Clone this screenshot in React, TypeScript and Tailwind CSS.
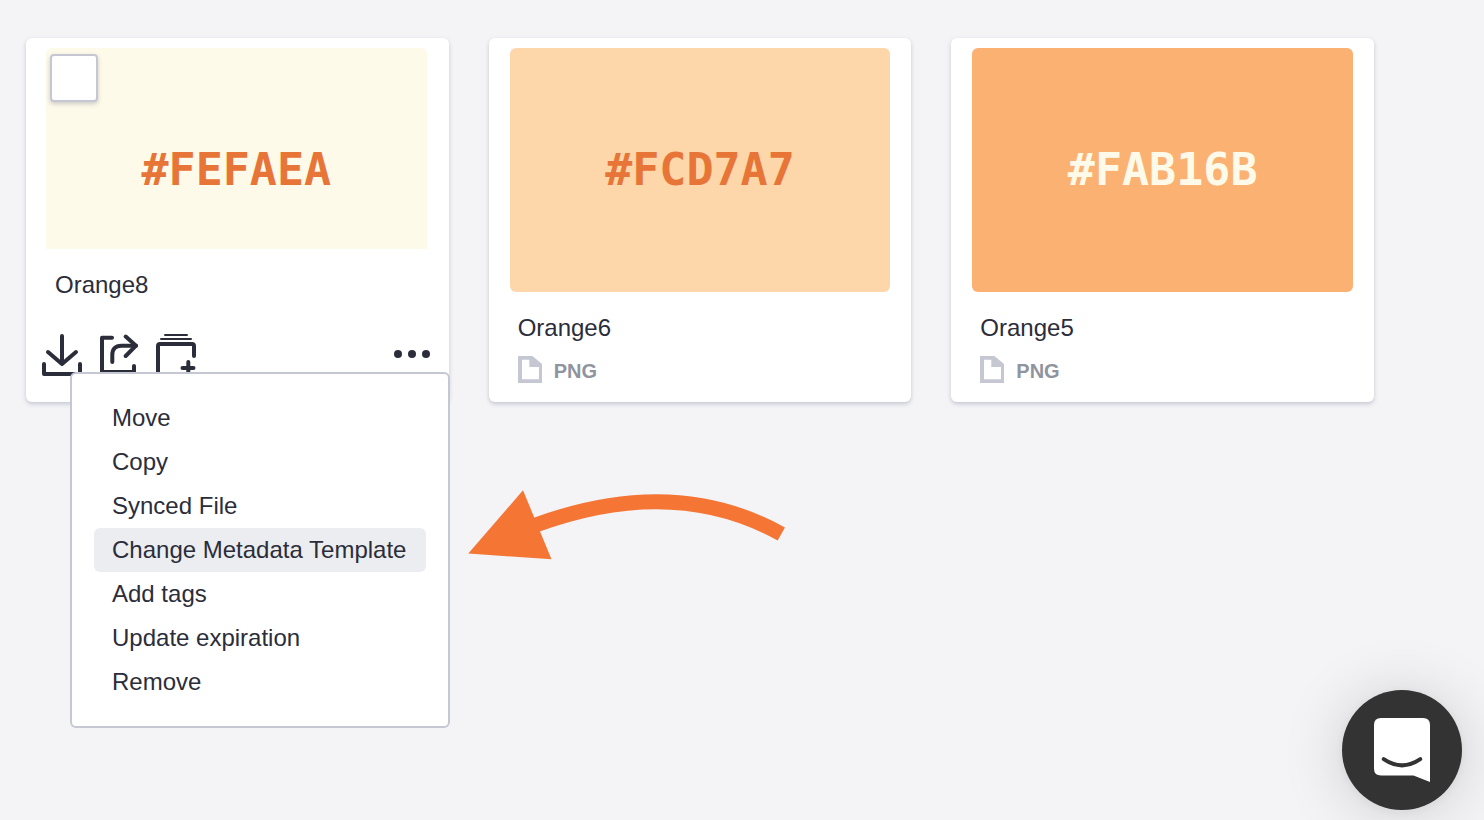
import React from 'react';

interface Asset {
  name: string;
  hex: string;
  tile: string;
  label: string;
}

const assets: Asset[] = [
  { name: 'Orange6', hex: '#FCD7A7', tile: 'bg-[#fdd7aa]', label: 'text-[#e87538]' },
  { name: 'Orange5', hex: '#FAB16B', tile: 'bg-[#fbb171]', label: 'text-[#fefaea]' },
];

const menuItems = [
  'Move',
  'Copy',
  'Synced File',
  'Change Metadata Template',
  'Add tags',
  'Update expiration',
  'Remove',
];

const DownloadIcon: React.FC = () => (
  <svg width="40" height="42" viewBox="0 0 40 42" fill="none" stroke="currentColor" strokeWidth="4" strokeLinecap="round" strokeLinejoin="round">
    <path d="M20 2v27M6 18l14 12 14-12" />
    <path d="M2 30v10h36V30" />
  </svg>
);

const ShareIcon: React.FC = () => (
  <svg width="38" height="42" viewBox="0 0 38 42" fill="none" stroke="currentColor" strokeWidth="4" strokeLinecap="round" strokeLinejoin="round">
    <path d="M12 3.7H2V38h32v-6" />
    <path d="M12.3 28v-7c0-6 3-9.3 9-9.3H36" />
    <path d="M25.7 2.5L36 11.7L25.7 22" />
  </svg>
);

const CollectionIcon: React.FC = () => (
  <svg width="40" height="42" viewBox="0 0 40 42" fill="none" stroke="currentColor" strokeWidth="4" strokeLinecap="round" strokeLinejoin="round">
    <path d="M9 1h22M5 5h30" strokeWidth="2" />
    <path d="M38 22V12q0-2-2-2H4q-2 0-2 2v28h20" />
    <path d="M32.3 28v12M26.5 34h11" />
  </svg>
);

const FileIcon: React.FC = () => (
  <svg width="24" height="27" viewBox="0 0 24 27" fill="#c5c8d3">
    <path fillRule="evenodd" d="M0 0h14.5L24 8v19H0zM4 3.7v19.6h17V11h-9.7V3.7z" />
  </svg>
);

const Swatch: React.FC<{ hex: string; label: string }> = ({ hex, label }) => (
  <div className={`flex h-[244px] items-center justify-center font-['DejaVu_Sans_Mono',monospace] text-[45px] font-bold ${label}`}>
    {hex}
  </div>
);

const AssetCard: React.FC<{ asset: Asset }> = ({ asset }) => (
  <article className="rounded-md bg-white px-[21px] pt-2.5 pb-[19px] shadow-[0_2px_4px_rgba(60,65,95,0.25)]">
    <div className={`rounded-md ${asset.tile}`}>
      <Swatch hex={asset.hex} label={asset.label} />
    </div>
    <h2 className="mt-[22px] px-2 text-2xl leading-7">{asset.name}</h2>
    <div className="mt-3.5 flex h-[27px] items-center gap-3 px-2 text-xl font-bold text-[#8f949e]">
      <FileIcon />
      <span className="pt-0.5">PNG</span>
    </div>
  </article>
);

const ContextMenu: React.FC = () => (
  <div role="menu" className="absolute top-[334px] left-11 w-[380px] rounded-md border-2 border-[#c5c8d3] bg-white p-[22px]">
    {menuItems.map((item) => (
      <button
        key={item}
        role="menuitem"
        type="button"
        className={`block h-11 w-full rounded-md px-[18px] text-left text-2xl whitespace-nowrap ${item === 'Change Metadata Template' ? 'bg-[#ecedf1]' : ''}`}
      >
        {item}
      </button>
    ))}
  </div>
);

const ActiveCard: React.FC = () => (
  <article className="relative rounded-md bg-white pt-2.5 shadow-[0_2px_4px_rgba(60,65,95,0.25)]">
    <div className="relative mr-[22px] ml-5 h-[201px] overflow-hidden rounded-t-md bg-[#fefaea]">
      <Swatch hex="#FEFAEA" label="text-[#e87538]" />
      <input
        type="checkbox"
        aria-label="Select Orange8"
        className="absolute top-1.5 left-1 size-12 appearance-none rounded-sm border-2 border-[#c5c8d3] bg-white shadow-[0_2px_4px_rgba(60,65,95,0.25)]"
      />
    </div>
    <h2 className="mt-[22px] px-[29px] text-2xl leading-7">Orange8</h2>
    <div className="mt-[35px] flex items-start gap-[18px] px-4">
      <button type="button" aria-label="Download"><DownloadIcon /></button>
      <button type="button" aria-label="Share"><ShareIcon /></button>
      <button type="button" aria-label="Add to collection"><CollectionIcon /></button>
      <button type="button" aria-label="More actions" className="ml-auto flex h-10 items-center gap-1.5 pr-[3px]">
        <span className="size-2 rounded-full bg-[#2b2d3a]" />
        <span className="size-2 rounded-full bg-[#2b2d3a]" />
        <span className="size-2 rounded-full bg-[#2b2d3a]" />
      </button>
    </div>
    <ContextMenu />
  </article>
);

const App: React.FC = () => {
  return (
    <main className="relative min-h-screen bg-[#f4f4f7] pt-[38px] pr-[110px] pl-[26px] font-['Liberation_Sans',Arial,sans-serif] text-[#2b2d3a]">
      <div className="grid grid-cols-3 gap-10">
        <ActiveCard />
        {assets.map((asset) => (
          <AssetCard key={asset.name} asset={asset} />
        ))}
      </div>

      {/* pointer to the highlighted menu entry */}
      <svg className="absolute top-[490px] left-[468px]" width="318" height="70" viewBox="468 490 318 70" aria-hidden="true">
        <path d="M468.3 553.5L523 490.3L551.5 559.3z" fill="#f47534" />
        <path d="M535 525.3C620 494 705 491.5 781.3 534" fill="none" stroke="#f47534" strokeWidth="15" />
      </svg>

      <button
        type="button"
        aria-label="Open chat"
        className="fixed right-[22px] bottom-2.5 flex size-[120px] items-center justify-center rounded-full bg-[#333333] shadow-[0_4px_64px_rgba(0,0,0,0.16),0_2px_12px_rgba(0,0,0,0.06)]"
      >
        <svg width="56" height="64" viewBox="0 0 56 64" fill="none">
          <path d="M7 0h42q7 0 7 7v57l-16.5-6.5H7q-7 0-7-7V7q0-7 7-7z" fill="#fff" />
          <path d="M9.7 41.2Q28 53.5 46.3 41.2" stroke="#333333" strokeWidth="4" strokeLinecap="round" />
        </svg>
      </button>
    </main>
  );
};

export default App;
